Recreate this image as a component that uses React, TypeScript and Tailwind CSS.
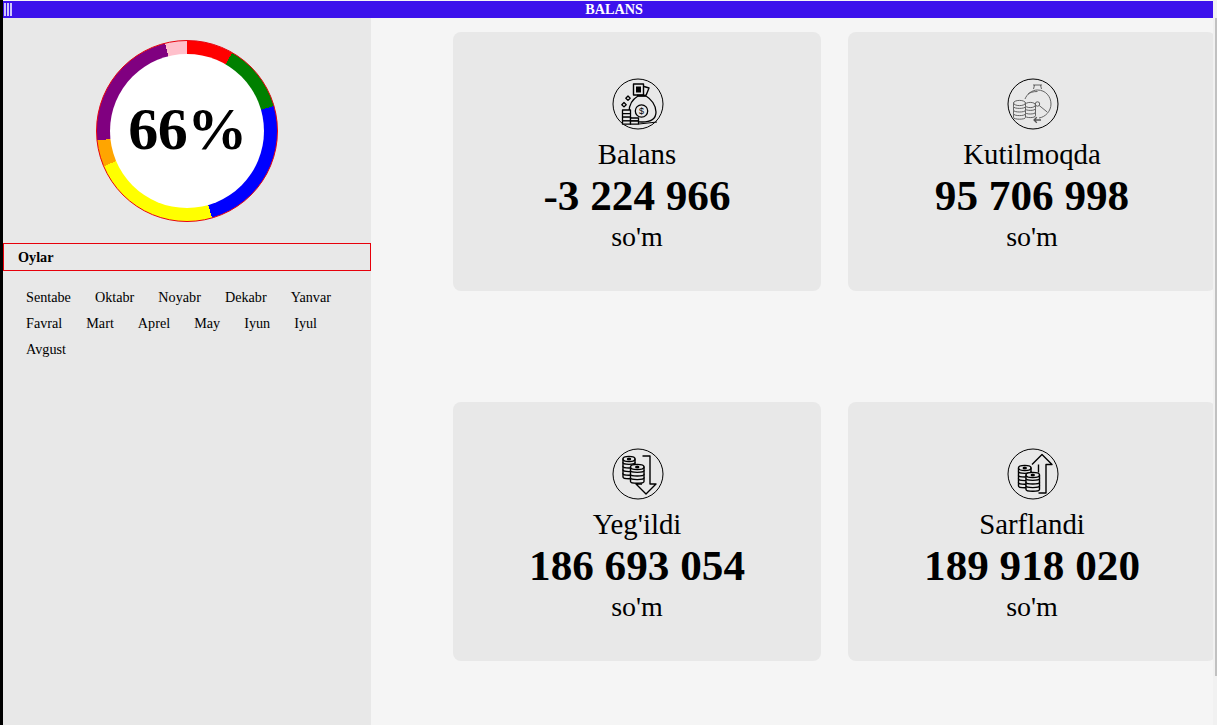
const months = ['Sentabe', 'Oktabr', 'Noyabr', 'Dekabr', 'Yanvar', 'Favral', 'Mart', 'Aprel', 'May', 'Iyun', 'Iyul', 'Avgust']

function Coins({ x, y, w, n, top = false }: { x: number; y: number; w: number; n: number; top?: boolean }) {
  const h = 3.6
  const rows = Array.from({ length: n })
  return (
    <g fill="#e8e8e8">
      {rows.map((_, i) => (
        <path
          key={n - i}
          d={`M${x} ${y + (n - 1 - i) * h}v${h}c0 2.4 ${w} 2.4 ${w} 0v-${h}z`}
        />
      ))}
      <ellipse cx={x + w / 2} cy={y} rx={w / 2} ry={2.6} />
      {top && <ellipse cx={x + w / 2} cy={y} rx={1.5} ry={0.9} fill="#000" />}
    </g>
  )
}

function IconShell({ children, stroke = '#000' }: { children: React.ReactNode; stroke?: string }) {
  return (
    <svg width="52" height="52" viewBox="0 0 52 52" fill="none" stroke={stroke} strokeWidth="1" strokeLinejoin="round">
      <circle cx="26" cy="26" r="25" stroke="#000" />
      {children}
    </svg>
  )
}

function BagIcon() {
  return (
    <IconShell>
      <path d="M26 18c-5 3-9 9-9 16 0 7 5 10 13 10s14-3 14-10c0-7-5-13-10-16z" strokeWidth="1.3" />
      <path d="M25 17.500h9" strokeWidth="1.800" />
      <rect x="21.500" y="6" width="10" height="11" strokeWidth="1.400" />
      <rect x="24" y="8.500" width="5" height="6" fill="#000" stroke="none" />
      <path d="M32 8.500l5 1.500-3 7.500" strokeWidth="1.400" />
      <circle cx="29.500" cy="33" r="6.200" strokeWidth="1.300" />
      <text x="29.500" y="36.200" textAnchor="middle" fontSize="9" fill="#000" stroke="none" fontFamily="'Liberation Sans', sans-serif">$</text>
      <path d="M16 18l2.200 2.200-2.200 2.200-2.200-2.200zM12 24.500l2.200 2.200-2.200 2.200-2.200-2.200z" strokeWidth="1.300" />
      <g fill="#e8e8e8" strokeWidth="1.300">
        <rect x="10.500" y="32" width="8" height="3.600" />
        <rect x="10.500" y="35.600" width="8" height="3.600" />
        <rect x="10.500" y="39.200" width="8" height="3.600" />
        <rect x="10.500" y="42.800" width="8" height="3.400" />
        <rect x="18.500" y="40" width="8" height="3" />
        <rect x="18.500" y="43" width="8" height="3.200" />
      </g>
      <path d="M27 46l18-2" />
    </IconShell>
  )
}

function WatchIcon() {
  return (
    <IconShell stroke="#555">
      <g strokeWidth="0.9">
        <path d="M18 21c2-5 7-9 12.500-9 8 0 13.500 6.500 13.500 14 0 7-5.500 13-12 14" />
        <path d="M21 16c2-1.500 5-2.500 9.500-2.500" />
        <path d="M26 7h9M27.500 7l-1 4M33.500 7l1 4" />
        <circle cx="30.500" cy="26" r="2.200" />
        <path d="M32.200 27.500l8 6.500" />
        <path d="M34 42h-7l2.800-2.800M27 42l2.800 2.800" strokeWidth="1.300" />
        <Coins x={18} y={27} w={10.500} n={3} />
        <Coins x={6.500} y={25} w={12} n={4} />
      </g>
    </IconShell>
  )
}

function DownIcon() {
  return (
    <IconShell>
      <g strokeWidth="1.400">
        <Coins x={11} y={11} w={12} n={5} top />
        <path d="M30.500 8h7.500v28h6l-10 10-10-10h6" fill="#e8e8e8" />
        <Coins x={18.500} y={19} w={13.500} n={4} top />
      </g>
    </IconShell>
  )
}

function UpIcon() {
  return (
    <IconShell>
      <g strokeWidth="1.400">
        <path d="M25 16.500l10-10 10 10h-6v28.500h-7.500" fill="#e8e8e8" />
        <path d="M31.500 16.500v8" />
        <Coins x={11.500} y={20} w={12.500} n={5} top />
        <Coins x={19} y={27} w={13.500} n={4} top />
      </g>
    </IconShell>
  )
}

function Card({ icon, title, amount }: { icon: React.ReactNode; title: string; amount: string }) {
  return (
    <div className="flex h-[259px] w-[368px] shrink-0 flex-col items-center rounded-lg bg-[#e8e8e8] pt-[46px]">
      <div className="mb-[6px] ml-[1px] h-[52px]">{icon}</div>
      <div className="h-[37px] text-[28.8px] leading-[36px]">{title}</div>
      <div className="h-[46px] text-[43.2px] leading-[46px] font-bold">{amount}</div>
      <div className="text-[28px] leading-[36px]">so'm</div>
    </div>
  )
}

export default function App() {
  return (
    <div className="flex h-[725px] w-[1217px] overflow-hidden bg-[#f5f5f5] font-['Liberation_Serif',serif] text-black">
      <div className="w-[3px] shrink-0 bg-black" />

      <div className="flex min-w-0 flex-1 flex-col">
        <header className="mt-px flex h-[17px] shrink-0 items-center bg-[#3c12ec] text-white">
          <div className="ml-[1px] flex h-[13px] w-[8px] gap-px">
            <span className="w-[2px] bg-[#cfc6fb]" />
            <span className="w-[2px] bg-[#cfc6fb]" />
            <span className="w-[2px] bg-[#cfc6fb]" />
          </div>
          <h1 className="flex-1 pl-[3px] text-center text-[14.2px] leading-[17px] font-bold">BALANS</h1>
        </header>

        <div className="flex min-h-0 flex-1">
          <aside className="w-[368px] shrink-0 bg-[#e8e8e8]">
            <div className="flex justify-center pt-[22px]">
              <div className="flex h-[182px] w-[182px] items-center justify-center rounded-full border border-red-600 bg-[conic-gradient(red_0deg_30deg,green_30deg_74deg,blue_74deg_164deg,yellow_164deg_247deg,orange_247deg_264deg,purple_264deg_346deg,pink_346deg_360deg)]">
                <div className="flex h-[154px] w-[154px] items-center justify-center rounded-full bg-white">
                  <span className="-mt-[4px] ml-[1px] text-[60px] tracking-[-0.5px] leading-none font-bold">66%</span>
                </div>
              </div>
            </div>

            <div className="mt-[21px] flex h-[28px] items-center border border-red-600 pt-[1px] pl-[14px] text-[14.2px] font-bold">
              Oylar
            </div>

            <ul className="flex flex-wrap gap-x-[24px] pt-[13px] pl-[23px] text-[14.2px] leading-[26px]">
              {months.map((month) => (
                <li key={month}>{month}</li>
              ))}
            </ul>
          </aside>

          <main className="min-w-0 flex-1 overflow-hidden pt-[14px] pl-[82px]">
            <div className="grid w-[763px] grid-cols-[368px_368px] gap-x-[27px] gap-y-[111px]">
              <Card icon={<BagIcon />} title="Balans" amount="-3 224 966" />
              <Card icon={<WatchIcon />} title="Kutilmoqda" amount="95 706 998" />
              <Card icon={<DownIcon />} title="Yeg'ildi" amount="186 693 054" />
              <Card icon={<UpIcon />} title="Sarflandi" amount="189 918 020" />
            </div>
          </main>
        </div>
      </div>

      <div className="flex w-[4px] shrink-0 flex-col bg-[#f1f1f1] pl-[2px]">
        <div className="mt-[18px] h-[658px] bg-[#c1c1c1]" />
      </div>
    </div>
  )
}
